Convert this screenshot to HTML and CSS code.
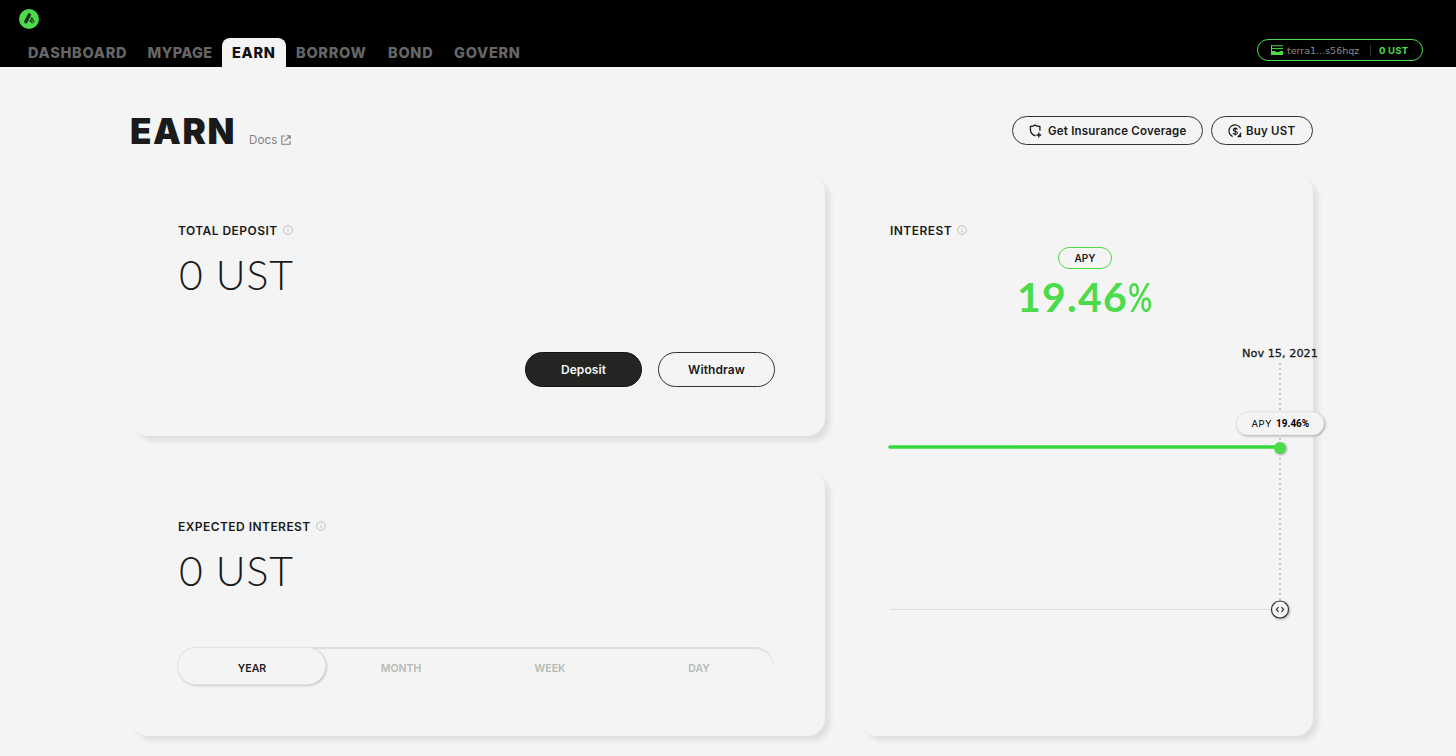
FILE: index.html
```html
<!DOCTYPE html>
<html lang="en">
<head>
    <meta charset="UTF-8">
    <meta name="viewport" content="width=device-width, initial-scale=1.0">
    <title>Anchor - Earn</title>
    <link rel="stylesheet" href="styles.css">
</head>
<body>
    <!-- Header -->
    <header class="header">
        <div class="brand">
            <svg class="logo" width="20" height="20" viewBox="0 0 20 20">
                <circle cx="10" cy="10" r="10" fill="#4bdb4b"/>
                <path d="M9.3 4.2h1.8l1 1.9-4 8.2-1.7.3-1.5-1.5z" fill="#1d2a1d"/>
                <path d="M11.8 8.4l3.6 4.8M10.8 11l2.8 3.3M10.6 12.3l3.6-3" fill="none" stroke="#1d2a1d" stroke-width="1.1"/>
            </svg>
        </div>
        <div class="header-row">
            <nav class="menu">
                <a class="menu-item w-dashboard">DASHBOARD</a>
                <a class="menu-item w-mypage">MYPAGE</a>
                <a class="menu-item w-earn active">EARN</a>
                <a class="menu-item w-borrow">BORROW</a>
                <a class="menu-item w-bond">BOND</a>
                <a class="menu-item w-govern">GOVERN</a>
            </nav>
            <button class="wallet">
                <svg width="12" height="10" viewBox="0 0 12 10">
                    <path d="M0 .8h12M0 3.6h12M.5 0v9.5" stroke="#4bdb4b" fill="none"/>
                    <path d="M0 6h4l1 1h3l1-1h3v4H0z" fill="#4bdb4b"/>
                </svg>
                <span class="wallet-address">terra1...s56hqz</span>
                <span class="wallet-balance">0 UST</span>
            </button>
        </div>
    </header>

    <main class="page">
        <div class="title-row">
            <h1 class="title">EARN</h1>
            <a class="docs">Docs
                <svg width="10" height="10" viewBox="0 0 10 10" fill="none" stroke="#808080" stroke-width="1.1">
                    <path d="M4 1H.8v8.2H9V6M5.8.8h3.4v3.4M9 1L3.6 6.4"/>
                </svg>
            </a>
            <div class="title-actions">
                <button class="outline-button insurance">
                    <svg width="13" height="14" viewBox="0 0 13 14" fill="none" stroke="#1a1a1a" stroke-width="1.3">
                        <path d="M6.5 11.9C3 10.6 1.4 8.5 1.4 5.4V2.5C3.2 2.4 4.6 2 6 1.1c1.4.9 2.8 1.3 4.9 1.4v4.3M9.8 8.6v4.8M7.4 11h4.8"/>
                    </svg>
                    Get Insurance Coverage
                </button>
                <button class="outline-button buy">
                    <svg width="14" height="14" viewBox="0 0 14 14" fill="none" stroke="#1a1a1a" stroke-width="1.2">
                        <path d="M12.6 4.6A6.1 6.1 0 1 0 4.6 12.6M13 8.6a6 6 0 0 1-2.6 3.6M9.6 12.6h3v-2"/>
                        <path d="M9.4 5.4C9 4.7 8.2 4.4 7.3 4.4c-2.6 0-2.6 2.6 0 2.8 2.9.2 2.9 3 0 3-1.1 0-1.9-.5-2.3-1.3M7.2 3.2v8.2" stroke-width="1.1"/>
                    </svg>
                    Buy UST
                </button>
            </div>
        </div>

        <div class="cards">
            <div class="left-column">
                <!-- Total deposit -->
                <section class="card deposit-card">
                    <h2 class="label">TOTAL DEPOSIT
                        <svg class="info" width="10" height="10" viewBox="0 0 10 10"><circle cx="5" cy="5" r="4.4"/><path d="M5 4.3v3.2M5 2.4v1"/></svg>
                    </h2>
                    <div class="amount">0 UST</div>
                    <div class="card-actions">
                        <button class="action primary">Deposit</button>
                        <button class="action">Withdraw</button>
                    </div>
                </section>

                <!-- Expected interest -->
                <section class="card expected-card">
                    <h2 class="label">EXPECTED INTEREST
                        <svg class="info" width="10" height="10" viewBox="0 0 10 10"><circle cx="5" cy="5" r="4.4"/><path d="M5 4.3v3.2M5 2.4v1"/></svg>
                    </h2>
                    <div class="amount">0 UST</div>
                    <div class="tabs">
                        <button class="tab selected">YEAR</button>
                        <button class="tab">MONTH</button>
                        <button class="tab">WEEK</button>
                        <button class="tab">DAY</button>
                    </div>
                </section>
            </div>

            <!-- Interest -->
            <section class="card interest-card">
                <h2 class="label">INTEREST
                    <svg class="info" width="10" height="10" viewBox="0 0 10 10"><circle cx="5" cy="5" r="4.4"/><path d="M5 4.3v3.2M5 2.4v1"/></svg>
                </h2>
                <div class="apy">
                    <span class="apy-badge">APY</span>
                    <div class="apy-value">19.46<span class="percent">%</span></div>
                </div>
                <svg class="chart" width="390" height="290" viewBox="0 0 390 290">
                    <path class="chart-axis" d="M0 269.5h390"/>
                    <path class="chart-cursor" d="M390 23v238"/>
                    <path class="chart-line" d="M0 107h390"/>
                    <circle class="chart-dot" cx="390" cy="108" r="6"/>
                    <text class="chart-date" x="390" y="17">Nov 15, 2021</text>
                    <rect class="chart-tooltip" x="346" y="72" width="88" height="23" rx="11.5"/>
                    <text class="tooltip-label" x="361.5" y="86.5">APY</text>
                    <text class="tooltip-value" x="386" y="86.5">19.46%</text>
                    <circle class="chart-handle" cx="390" cy="269.5" r="8.5"/>
                    <path class="chart-arrows" d="M388.6 267.2l-2.2 2.3 2.2 2.3M391.4 267.2l2.2 2.3-2.2 2.3"/>
                </svg>
            </section>
        </div>
    </main>
</body>
</html>
```

FILE: styles.css
```css
/* General Styles */
* {
    box-sizing: border-box;
}

body {
    margin: 0;
    height: 756px;
    overflow: hidden;
    background-color: #f4f4f4;
    color: #1a1a1a;
    font-family: Inter, "Liberation Sans", sans-serif;
}

button {
    font-family: inherit;
    background: none;
    border: none;
    padding: 0;
    color: inherit;
    cursor: pointer;
}

svg {
    display: block;
    flex: none;
    overflow: visible;
}

/* Header */
.header {
    height: 67px;
    background-color: #000;
    display: flex;
    flex-direction: column;
    justify-content: space-between;
}

.brand {
    padding: 9px 0 0 19px;
}

.header-row {
    display: flex;
    justify-content: space-between;
    align-items: flex-end;
    padding: 0 33px 0 18px;
}

.menu {
    display: flex;
}

.menu-item {
    height: 29px;
    padding: 0 10px;
    line-height: 30px;
    font-size: 14.5px;
    font-weight: 800;
    letter-spacing: 0.75px;
    color: #666;
    white-space: nowrap;
    border-radius: 8px 8px 0 0;
}

.w-dashboard { width: 119.5px; }
.w-mypage { width: 84.5px; letter-spacing: 0.3px; }
.w-earn { width: 64px; }
.w-borrow { width: 92px; }
.w-bond { width: 66px; }
.w-govern { width: 86px; }

.menu-item.active {
    background-color: #f4f4f4;
    color: #111;
}

.wallet {
    display: flex;
    align-items: center;
    width: 166px;
    height: 22px;
    margin-bottom: 6px;
    padding-left: 13px;
    border: 1px solid #4bdb4b;
    border-radius: 11px;
    font-size: 9.5px;
}

.wallet-address {
    font-family: "DejaVu Sans", sans-serif;
    width: 84px;
    margin-left: 4px;
    text-align: left;
    color: #8a8a8a;
    border-right: 1px solid #333;
}

.wallet-balance {
    margin-left: 8px;
    font-weight: 700;
    letter-spacing: 0.2px;
    color: #4bdb4b;
}

/* Page */
.page {
    width: 1182px;
    margin-left: 131px;
}

.title-row {
    display: flex;
    height: 108px;
    padding-top: 50px;
}

.title {
    margin: -1px 0 0 -1px;
    width: 119px;
    font-size: 35px;
    line-height: 30px;
    font-weight: 900;
    letter-spacing: 1.6px;
}

.docs {
    display: flex;
    gap: 3px;
    align-items: center;
    height: 16px;
    margin-top: 15px;
    font-size: 11.5px;
    letter-spacing: 0.2px;
    color: #808080;
}

.title-actions {
    display: flex;
    gap: 8px;
    margin-left: auto;
    margin-top: -1px;
}

.outline-button {
    display: flex;
    align-items: center;
    gap: 6px;
    height: 29px;
    padding-left: 16px;
    border: 1px solid #333;
    border-radius: 15px;
    font-size: 11.5px;
    font-weight: 600;
    letter-spacing: 0.2px;
    white-space: nowrap;
}

.insurance {
    width: 191px;
}

.buy {
    width: 102px;
    gap: 4px;
}

/* Cards */
.cards {
    display: flex;
    gap: 35px;
}

.left-column {
    display: flex;
    flex-direction: column;
    gap: 35px;
}

.card {
    display: flex;
    flex-direction: column;
    border-radius: 18px;
    box-shadow: 5px 5px 5px #dfdfe2;
}

.deposit-card {
    width: 694px;
    height: 261px;
    padding: 47px 50px 49px 47px;
}

.expected-card {
    width: 694px;
    height: 265px;
    padding: 47px 51px 51px 47px;
}

.interest-card {
    width: 453px;
    height: 561px;
    padding: 47px 33px 0 30px;
}

.label {
    display: flex;
    align-items: center;
    gap: 5px;
    margin: 0;
    height: 17px;
    font-size: 12px;
    font-weight: 600;
    letter-spacing: 0.45px;
}

.info {
    fill: none;
    stroke: #b5b5b5;
    stroke-width: 0.8;
    margin-top: -2px;
}

.amount {
    margin-top: 12px;
    padding-left: 1px;
    line-height: 48px;
    font-family: Lato, sans-serif;
    font-size: 41px;
    font-weight: 300;
    letter-spacing: 0.9px;
}

.card-actions {
    display: flex;
    justify-content: flex-end;
    gap: 16px;
    margin-top: auto;
}

.action {
    width: 117px;
    height: 35px;
    border: 1px solid #333;
    border-radius: 18px;
    font-size: 12px;
    font-weight: 600;
    letter-spacing: 0.1px;
}

.action.primary {
    background-color: #222522;
    border-color: #111;
    color: #f4f4f4;
}

.tabs {
    display: flex;
    height: 38px;
    margin-top: auto;
    margin-left: -1px;
    border-radius: 19px;
    box-shadow: inset 0 2px 1px #dedee0;
}

.tab {
    width: 149px;
    padding: 4px 0 0 1px;
    font-size: 10.5px;
    font-weight: 600;
    color: #b4bab4;
}

.tab.selected {
    border: 1px solid #e4e4e6;
    border-radius: 19px;
    background-color: #f4f4f4;
    color: #1a1a1a;
    box-shadow: 1px 1px 2px #c8c8ca;
}

/* Interest */
.apy {
    display: flex;
    flex-direction: column;
    align-items: center;
}

.apy-badge {
    width: 54px;
    height: 22px;
    margin-top: 8px;
    line-height: 21px;
    text-align: center;
    border: 1px solid #4bdb4b;
    border-radius: 11px;
    font-size: 10px;
    font-weight: 600;
}

.apy-value {
    display: flex;
    margin-top: 4px;
    line-height: 48px;
    font-family: Lato, sans-serif;
    font-size: 41px;
    font-weight: 700;
    letter-spacing: 1.2px;
    color: #4bdb4b;
}

.percent {
    width: 25px;
    font-weight: 600;
    transform: scaleX(0.73);
    transform-origin: left;
}

.chart {
    margin-top: 19px;
}

.chart-axis {
    stroke: #dedee0;
}

.chart-cursor {
    stroke: #b4b8b4;
    stroke-width: 1.5;
    stroke-dasharray: 2 3;
}

.chart-line {
    stroke: #36d93a;
    stroke-width: 3.5;
    stroke-linecap: round;
}

.chart-dot {
    fill: #4bdb4b;
    filter: drop-shadow(1px 1px 1px #aaa);
}

.chart-date {
    font-family: "DejaVu Sans", sans-serif;
    font-size: 11.3px;
    text-anchor: middle;
    fill: #1a1a1a;
    stroke: #1a1a1a;
    stroke-width: 0.3;
}

.chart-tooltip {
    fill: #f4f4f4;
    stroke: #ddd;
    stroke-width: 0.6;
    filter: drop-shadow(1px 1px 1px #aaa);
}

.tooltip-label {
    font-size: 9.5px;
    letter-spacing: 0.5px;
}

.tooltip-value {
    font-family: Roboto, sans-serif;
    font-size: 10px;
    font-weight: 700;
    fill: #000;
}

.chart-handle {
    fill: #f4f4f4;
    stroke: #333;
    stroke-width: 1.2;
    filter: drop-shadow(1px 1px 1px #aaa);
}

.chart-arrows {
    fill: none;
    stroke: #333;
    stroke-width: 1.2;
}
```
